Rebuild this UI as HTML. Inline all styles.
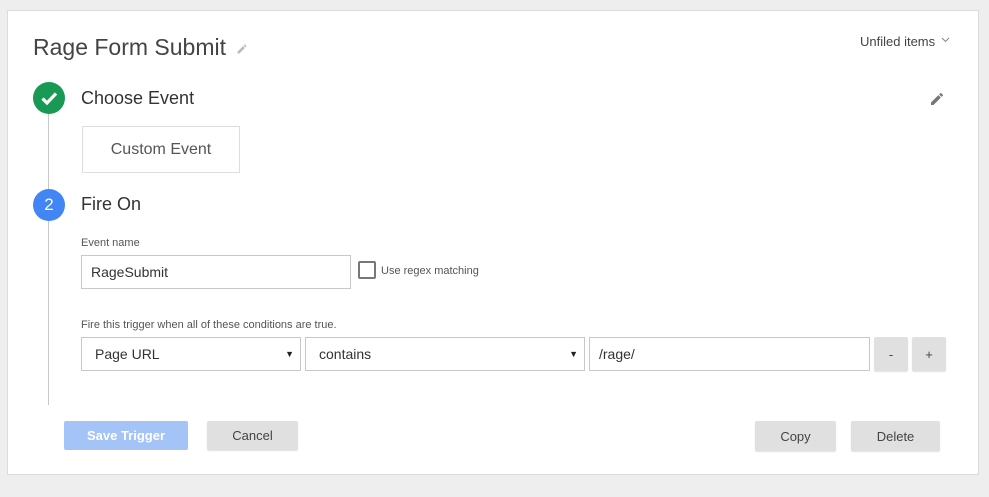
<!DOCTYPE html>
<html><head><style>
*{margin:0;padding:0;box-sizing:border-box}
body{width:989px;height:497px;background:#eeeeee;font-family:"Liberation Sans",sans-serif;position:relative;overflow:hidden;color:#333}
.a{position:absolute}
.card{left:7px;top:10px;width:972px;height:465px;background:#fff;border:1px solid #dcdcdc}
.box{border:1px solid #c8c8c8;background:#fff;font-size:14px;color:#333;display:flex;align-items:center}
.btn{background:#e0e0e0;border-radius:2px;font-size:13px;color:#444;display:flex;align-items:center;justify-content:center;box-shadow:0 1px 1px rgba(0,0,0,.12)}
.sm{font-size:11px;color:#555}
.arr{position:absolute;right:6px;top:11px;font-size:9px;color:#222}
</style></head><body>
<div class="a card"></div>
<div class="a" style="left:33px;top:34px;font-size:23px;color:#444">Rage Form Submit</div>
<svg class="a" style="left:236px;top:43px" width="12" height="12" viewBox="0 0 24 24"><path d="M3 17.25V21h3.75L17.81 9.94l-3.75-3.75L3 17.25zM20.71 7.04a1 1 0 000-1.41l-2.34-2.34a1 1 0 00-1.41 0l-1.83 1.83 3.75 3.75 1.83-1.83z" fill="#bbb"/></svg>
<div class="a" style="left:860px;top:34px;font-size:13px;color:#444">Unfiled items</div>
<svg class="a" style="left:941px;top:37px" width="9" height="6" viewBox="0 0 9 6"><path d="M1 1l3.5 3.5L8 1" stroke="#888" fill="none" stroke-width="1"/></svg>
<svg class="a" style="left:929px;top:91px" width="16" height="16" viewBox="0 0 24 24"><path d="M3 17.25V21h3.75L17.81 9.94l-3.75-3.75L3 17.25zM20.71 7.04a1 1 0 000-1.41l-2.34-2.34a1 1 0 00-1.41 0l-1.83 1.83 3.75 3.75 1.83-1.83z" fill="#777"/></svg>
<div class="a" style="left:48px;top:112px;width:1px;height:293px;background:#c8c8c8"></div>
<div class="a" style="left:33px;top:82px;width:32px;height:32px;border-radius:50%;background:#189a55"></div>
<svg class="a" style="left:33px;top:82px" width="32" height="32"><path d="M9.5 16.5l4.5 4.5 9-9.5" stroke="#fff" stroke-width="3.2" fill="none"/></svg>
<div class="a" style="left:81px;top:88px;font-size:18px;color:#333">Choose Event</div>
<div class="a" style="left:82px;top:126px;width:158px;height:47px;border:1px solid #ddd;font-size:16px;color:#555;display:flex;align-items:center;justify-content:center">Custom Event</div>
<div class="a" style="left:33px;top:189px;width:32px;height:32px;border-radius:50%;background:#4285f4;color:#fff;font-size:17px;display:flex;align-items:center;justify-content:center">2</div>
<div class="a" style="left:81px;top:194px;font-size:18px;color:#333">Fire On</div>
<div class="a sm" style="left:81px;top:237px">Event name</div>
<div class="a box" style="left:81px;top:255px;width:270px;height:34px;padding-left:9px">RageSubmit</div>
<div class="a" style="left:358px;top:261px;width:18px;height:18px;border:2px solid #777;border-radius:2px"></div>
<div class="a sm" style="left:381px;top:265px">Use regex matching</div>
<div class="a sm" style="left:81px;top:319px">Fire this trigger when all of these conditions are true.</div>
<div class="a box" style="left:81px;top:337px;width:220px;height:34px;padding-left:13px">Page URL<span class="arr">▼</span></div>
<div class="a box" style="left:305px;top:337px;width:280px;height:34px;padding-left:13px">contains<span class="arr">▼</span></div>
<div class="a box" style="left:589px;top:337px;width:281px;height:34px;padding-left:9px">/rage/</div>
<div class="a btn" style="left:874px;top:337px;width:34px;height:34px">-</div>
<div class="a btn" style="left:912px;top:337px;width:34px;height:34px">+</div>
<div class="a btn" style="left:64px;top:421px;width:124px;height:29px;background:#a4c4f8;color:#fff;font-weight:bold;box-shadow:none">Save Trigger</div>
<div class="a btn" style="left:207px;top:421px;width:91px;height:29px">Cancel</div>
<div class="a btn" style="left:755px;top:421px;width:81px;height:30px">Copy</div>
<div class="a btn" style="left:851px;top:421px;width:89px;height:30px">Delete</div>
</body></html>
